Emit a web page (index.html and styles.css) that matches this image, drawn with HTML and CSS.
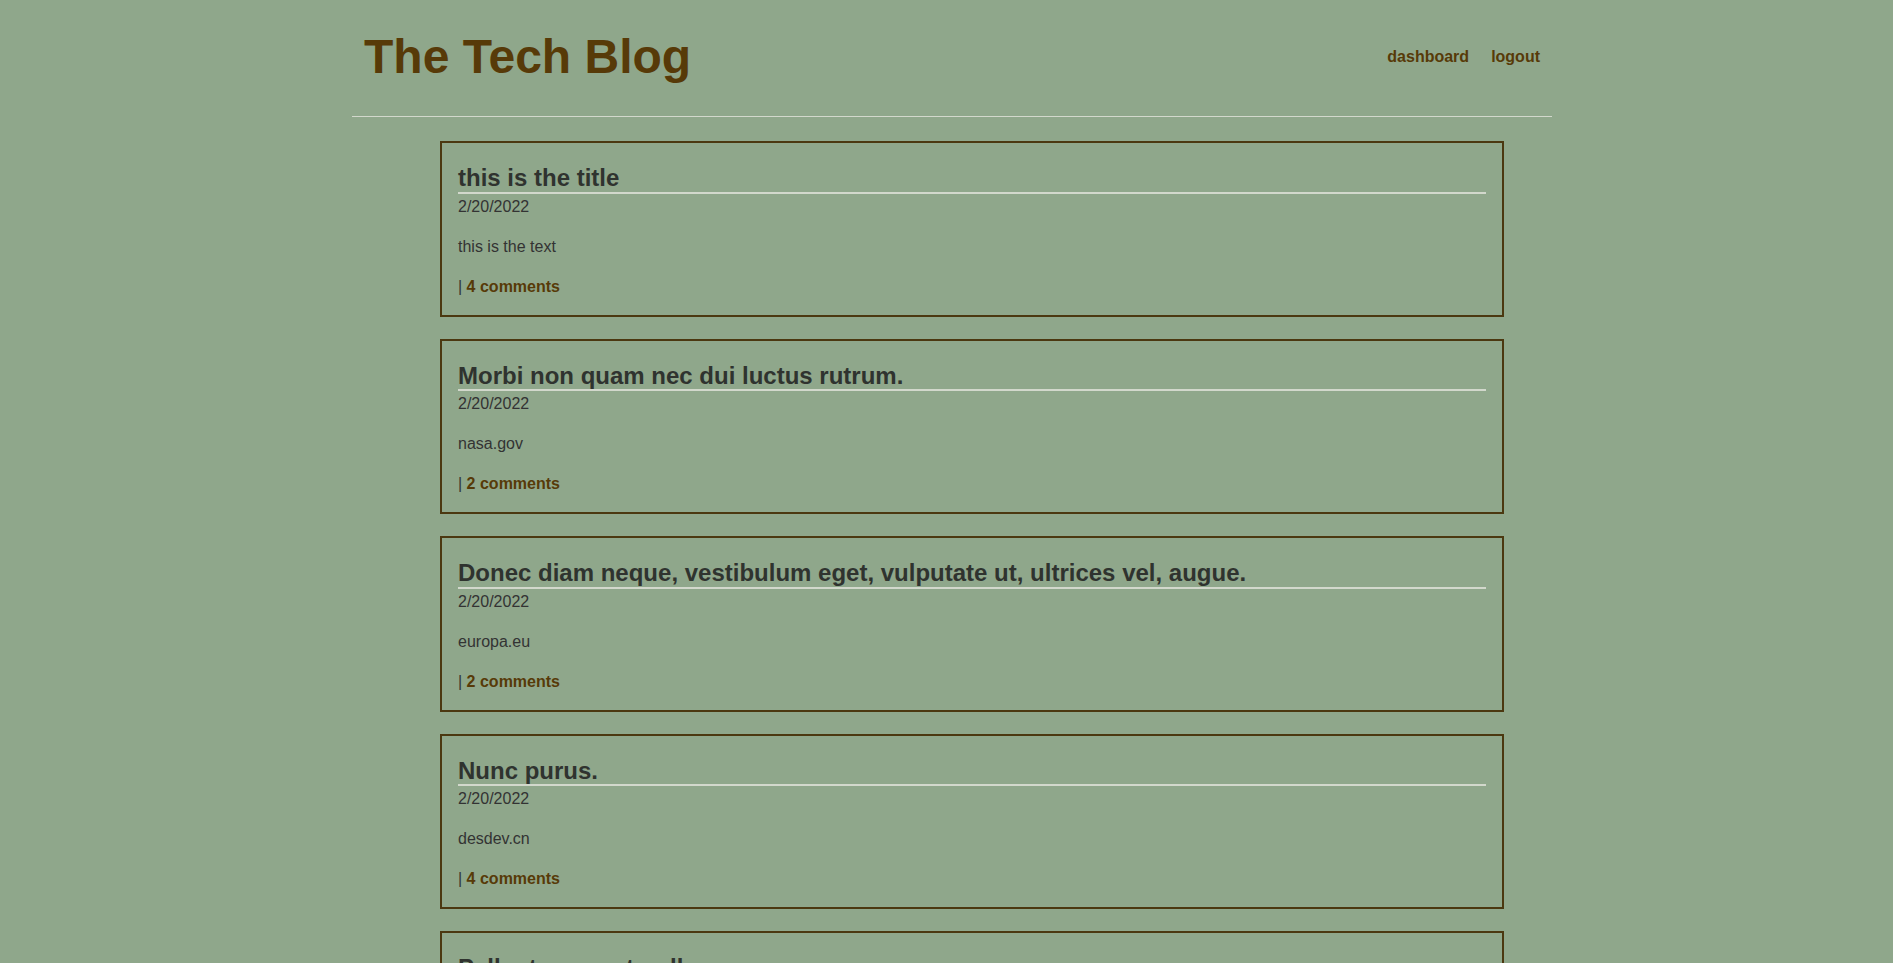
FILE: index.html
```html
<!DOCTYPE html>
<html lang="en">
<head>
<meta charset="utf-8">
<title>The Tech Blog</title>
<link rel="stylesheet" href="styles.css">
</head>
<body>
<div class="wrapper">
  <header class="site-header">
    <h1 class="site-title">The Tech Blog</h1>
    <nav class="site-nav">
      <a href="#" class="nav-link">dashboard</a>
      <a href="#" class="nav-link">logout</a>
    </nav>
  </header>
  <main class="posts">
    <article class="post">
      <h2 class="post-title">this is the title</h2>
      <p class="post-date">2/20/2022</p>
      <p class="post-text">this is the text</p>
      <p class="post-meta">| <a href="#" class="comments-link">4 comments</a></p>
    </article>
    <article class="post">
      <h2 class="post-title">Morbi non quam nec dui luctus rutrum.</h2>
      <p class="post-date">2/20/2022</p>
      <p class="post-text">nasa.gov</p>
      <p class="post-meta">| <a href="#" class="comments-link">2 comments</a></p>
    </article>
    <article class="post">
      <h2 class="post-title">Donec diam neque, vestibulum eget, vulputate ut, ultrices vel, augue.</h2>
      <p class="post-date">2/20/2022</p>
      <p class="post-text">europa.eu</p>
      <p class="post-meta">| <a href="#" class="comments-link">2 comments</a></p>
    </article>
    <article class="post">
      <h2 class="post-title">Nunc purus.</h2>
      <p class="post-date">2/20/2022</p>
      <p class="post-text">desdev.cn</p>
      <p class="post-meta">| <a href="#" class="comments-link">4 comments</a></p>
    </article>
    <article class="post">
      <h2 class="post-title">Pellentesque at nulla.</h2>
      <p class="post-date">2/20/2022</p>
      <p class="post-text">google.com</p>
      <p class="post-meta">| <a href="#" class="comments-link">1 comments</a></p>
    </article>
  </main>
</div>
</body>
</html>
```

FILE: styles.css
```css
html, body {
  background: #8fa78b;
}

body {
  margin: 0;
  padding: 0 0 0 11px;
  font-family: "Liberation Sans", Arial, sans-serif;
  color: #333;
}

.wrapper {
  width: 1200px;
  margin: 0 auto;
}

.site-header {
  display: flex;
  align-items: center;
  justify-content: space-between;
  padding: 29px 12px 31px 12px;
  border-bottom: 1px solid #d2d8cc;
}

.site-title {
  margin: 0;
  font-size: 48px;
  line-height: 56px;
  font-weight: bold;
  color: #573a08;
}

.site-nav {
  display: flex;
  gap: 22px;
}

.nav-link {
  font-size: 16px;
  font-weight: bold;
  color: #573a08;
  text-decoration: none;
}

.posts {
  display: flex;
  flex-direction: column;
  gap: 22px;
  width: 1064px;
  margin-left: 88px;
  padding-top: 24px;
}

.post {
  border: 2px solid #4b3810;
  padding: 21px 16px 16px 16px;
}

.post-title {
  margin: 0;
  font-size: 24px;
  line-height: 1.15;
  font-weight: bold;
  color: #2f332f;
  border-bottom: 2px solid #d2d8cc;
}

.post-date,
.post-text,
.post-meta {
  margin: 16px 0 0 0;
  font-size: 16px;
  line-height: 24px;
  color: #333;
}

.post-date {
  margin-top: 1px;
}

.comments-link {
  font-weight: bold;
  color: #573a08;
  text-decoration: none;
}
```
